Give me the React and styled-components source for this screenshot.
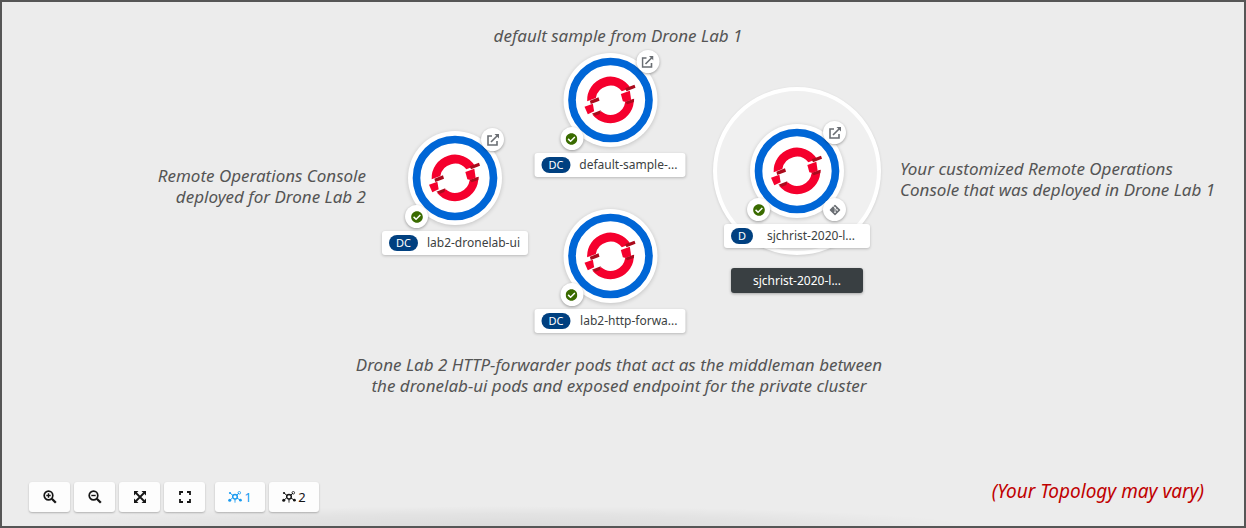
import React from "react";
import styled, { createGlobalStyle } from "styled-components";
import { FaCheckCircle, FaGitAlt } from "react-icons/fa";

const GlobalStyle = createGlobalStyle`
  *, *::before, *::after { box-sizing: border-box; }
  body { margin: 0; background: #ececec; font-family: "Noto Sans", "Open Sans", sans-serif; }
`;

const Page = styled.main`
  display: flex;
  flex-direction: column;
  min-height: 100vh;
  border: 2px solid #565656;
  background: #ececec;
`;

const Canvas = styled.section`
  position: relative;
  flex: 1;
  min-height: 440px;
`;

const Node = styled.article`
  position: absolute;
  top: ${(p) => p.$y}px;
  left: calc(50% + ${(p) => p.$x}px);
  display: flex;
  flex-direction: column;
  align-items: center;
  gap: 6px;
  transform: translateX(-50%);
`;

const Disc = styled.div`
  position: relative;
  width: 94px;
  height: 94px;
  border-radius: 50%;
  background: #fff;
  box-shadow: 0 1px 4px rgba(0, 0, 0, 0.18);

  > svg { display: block; width: 100%; height: 100%; }
`;

const places = {
  open: "top: -3px; right: -2px;",
  status: "bottom: -3px; left: -3px;",
  source: "bottom: -3px; right: -2px;",
};

const Badge = styled.a`
  position: absolute;
  ${(p) => places[p.$place]}
  display: flex;
  align-items: center;
  justify-content: center;
  width: 23px;
  height: 23px;
  border-radius: 50%;
  background: #fff;
  color: ${(p) => (p.$place === "status" ? "#3a6b00" : "#6a6e73")};
  box-shadow: 0 1px 3px rgba(0, 0, 0, 0.35);
`;

const Label = styled.div`
  display: flex;
  align-items: center;
  justify-content: space-between;
  width: ${(p) => p.$width}px;
  height: 24px;
  padding: 0 8px 0 7px;
  border-radius: 3px;
  background: #fff;
  color: #3c3f42;
  font-size: 12px;
  line-height: 24px;
  white-space: nowrap;
  box-shadow: 0 1px 3px rgba(0, 0, 0, 0.22);
`;

const Kind = styled.span`
  min-width: 22px;
  padding: 0 7px;
  border-radius: 8px;
  background: #004080;
  color: #fff;
  font-size: 11px;
  line-height: 16px;
  text-align: center;
`;

const Name = styled.span`
  ${(p) => p.$spread && "padding-right: 7px;"}
`;

const Group = styled.div`
  position: absolute;
  top: 85px;
  left: calc(50% + 174px);
  width: 168px;
  height: 168px;
  border: 4px solid #fff;
  border-radius: 50%;
  background: #f0f0f0;
  box-shadow: 0 1px 3px rgba(0, 0, 0, 0.12);
  transform: translateX(-50%);
`;

const GroupName = styled.div`
  position: absolute;
  top: 266px;
  left: calc(50% + 174px);
  width: 132px;
  border-radius: 3px;
  background: #393f42;
  color: #fff;
  font-size: 12px;
  line-height: 25px;
  text-align: center;
  box-shadow: 0 1px 3px rgba(0, 0, 0, 0.3);
  transform: translateX(-50%);
`;

const Note = styled.p`
  position: absolute;
  top: ${(p) => p.$y}px;
  left: calc(50% + ${(p) => p.$x}px);
  margin: 0;
  color: #555;
  font: italic 17px/21px "Noto Sans", sans-serif;
  text-align: ${(p) => p.$align || "left"};
  white-space: nowrap;
  transform: translateX(${(p) => ({ center: "-50%", right: "-100%" })[p.$align] || "0"});
`;

const Footer = styled.footer`
  display: flex;
  align-items: flex-start;
  justify-content: space-between;
  padding: 0 40px 14px 27px;
  background: radial-gradient(ellipse 38% 100% at 40% 100%, rgba(0, 0, 0, 0.07), rgba(0, 0, 0, 0.04) 60%, transparent) bottom / 100% 20px no-repeat;
`;

const Toolbar = styled.div`
  display: flex;
  gap: 4px;
`;

const Tools = styled(Toolbar)`
  gap: 10px;
`;

const Tool = styled.button`
  display: flex;
  align-items: center;
  justify-content: center;
  gap: 2px;
  width: ${(p) => (p.$wide ? 50 : 41)}px;
  height: 30px;
  padding: 0;
  border: 0;
  border-radius: 3px;
  background: #fdfdfd;
  color: ${(p) => (p.$active ? "#1a9bf0" : "#151515")};
  font: 13px "Noto Sans", sans-serif;
  box-shadow: 0 1px 2px rgba(0, 0, 0, 0.25);
`;

const Warning = styled.p`
  margin: 0;
  color: #c00000;
  font: italic 19px/18px "Noto Sans", sans-serif;
`;

const OpenShiftLogo = () => (
  <svg viewBox="-141 -141 282 282" aria-hidden="true">
    <circle r="115.500" fill="none" stroke="#0066d6" strokeWidth="23" />
    <g fill="#f5002d">
      <path d="M-70 4A70 70 0 0 1 60-36L34-26A44 44 0 0 0-44-6Z" />
      <path d="M70-4A70 70 0 0 1-54 44L-28 34A44 44 0 0 0 44 7Z" />
      <path d="M31-18 58-28 62-1 46 6 37 4Z" />
      <path d="M-78 20-53 11-49 34-68 43Z" />
    </g>
    <g fill="#aa0a1c">
      <path d="M44-35 72-46 75-37 48-26Z" />
      <path d="M44 6 71-4 70 6 50 13Z" />
      <path d="M-62 2-36-8-33 2-59 12Z" />
      <path d="M-56 41-29 31-32 42-45 47Z" />
    </g>
  </svg>
);

const OpenIcon = () => (
  <svg width="12" height="12" viewBox="0 0 12 12" fill="none" stroke="currentColor" strokeWidth="1.600" aria-hidden="true">
    <path d="M5 2H1v9h9V7M4 8l6.500-6.500" />
    <path d="M7.500 0H12v4.500z" fill="currentColor" stroke="none" />
  </svg>
);

const ZoomIcon = ({ plus }) => (
  <svg width="14" height="14" viewBox="0 0 14 14" fill="none" stroke="currentColor" aria-hidden="true">
    <circle cx="5.500" cy="5.500" r="4.300" strokeWidth="1.700" />
    <path d="m8.800 8.800 4 4" strokeWidth="2.300" />
    <path d={plus ? "M3.300 5.500h4.400M5.500 3.300v4.400" : "M3.300 5.500h4.400"} strokeWidth="1.400" />
  </svg>
);

const FitIcon = () => (
  <svg width="12" height="12" viewBox="0 0 12 12" fill="currentColor" aria-hidden="true">
    <path d="M0 0h4.500L0 4.500ZM12 0v4.500L7.500 0ZM0 12V7.500L4.500 12ZM12 12H7.500L12 7.500Z" />
    <path d="m2 2 8 8M10 2l-8 8" stroke="currentColor" strokeWidth="1.800" />
  </svg>
);

const ResetIcon = () => (
  <svg width="12" height="12" viewBox="0 0 12 12" fill="none" stroke="currentColor" strokeWidth="1.800" aria-hidden="true">
    <path d="M1 4V1h3M8 1h3v3M11 8v3H8M4 11H1V8" />
  </svg>
);

const LayoutIcon = () => (
  <svg width="14" height="12" viewBox="0 0 14 12" fill="currentColor" aria-hidden="true">
    <path d="m2 2 3 2.500M9 4l2-2M4.500 7 2 9M9 7l3 2M7 8v2" stroke="currentColor" strokeWidth="1" />
    <circle cx="7" cy="5.700" r="2.300" fill="none" stroke="currentColor" strokeWidth="1.500" />
    <circle cx="2" cy="2" r="1.100" />
    <circle cx="11.300" cy="1.800" r="1.300" fill="none" stroke="currentColor" strokeWidth=".8" />
    <circle cx="1.700" cy="9.200" r="1.500" />
    <circle cx="12.400" cy="9.200" r="1.400" />
    <circle cx="7" cy="10.800" r=".9" opacity=".6" />
  </svg>
);

const nodes = [
  { x: -168, y: 129, kind: "DC", name: "lab2-dronelab-ui", width: 146, open: true },
  { x: -13, y: 51, kind: "DC", name: "default-sample-...", width: 151, open: true },
  { x: -13, y: 207, kind: "DC", name: "lab2-http-forwa...", width: 151 },
  { x: 174, y: 122, kind: "D", name: "sjchrist-2020-l...", width: 146, open: true, source: true },
];

const Workload = ({ x, y, kind, name, width, open, source }) => (
  <Node $x={x} $y={y}>
    <Disc>
      <OpenShiftLogo />
      {open && <Badge href="#open" $place="open" aria-label={`Open ${name}`}><OpenIcon /></Badge>}
      <Badge href="#status" $place="status" aria-label="Running"><FaCheckCircle size={12} /></Badge>
      {source && <Badge href="#source" $place="source" aria-label="Source"><FaGitAlt size={12} /></Badge>}
    </Disc>
    <Label $width={width}>
      <Kind>{kind}</Kind>
      <Name $spread={Boolean(source)}>{name}</Name>
    </Label>
  </Node>
);

export default function App() {
  return (
    <>
      <GlobalStyle />
      <Page>
        <Canvas aria-label="Topology">
          <Group />
          {nodes.map((node) => <Workload key={node.name} {...node} />)}
          <GroupName>sjchrist-2020-l...</GroupName>
          <Note $x={-5} $y={23} $align="center">default sample from Drone Lab 1</Note>
          <Note $x={-257} $y={163} $align="right">Remote Operations Console<br />deployed for Drone Lab 2</Note>
          <Note $x={277} $y={156}>Your customized Remote Operations<br />Console that was deployed in Drone Lab 1</Note>
          <Note $x={-4} $y={352} $align="center">
            Drone Lab 2 HTTP-forwarder pods that act as the middleman between<br />
            the dronelab-ui pods and exposed endpoint for the private cluster
          </Note>
        </Canvas>
        <Footer>
          <Tools>
            <Toolbar>
              <Tool aria-label="Zoom in"><ZoomIcon plus /></Tool>
              <Tool aria-label="Zoom out"><ZoomIcon /></Tool>
              <Tool aria-label="Fit to screen"><FitIcon /></Tool>
              <Tool aria-label="Reset view"><ResetIcon /></Tool>
            </Toolbar>
            <Toolbar>
              <Tool $wide $active><LayoutIcon />1</Tool>
              <Tool $wide><LayoutIcon />2</Tool>
            </Toolbar>
          </Tools>
          <Warning>(Your Topology may vary)</Warning>
        </Footer>
      </Page>
    </>
  );
}
